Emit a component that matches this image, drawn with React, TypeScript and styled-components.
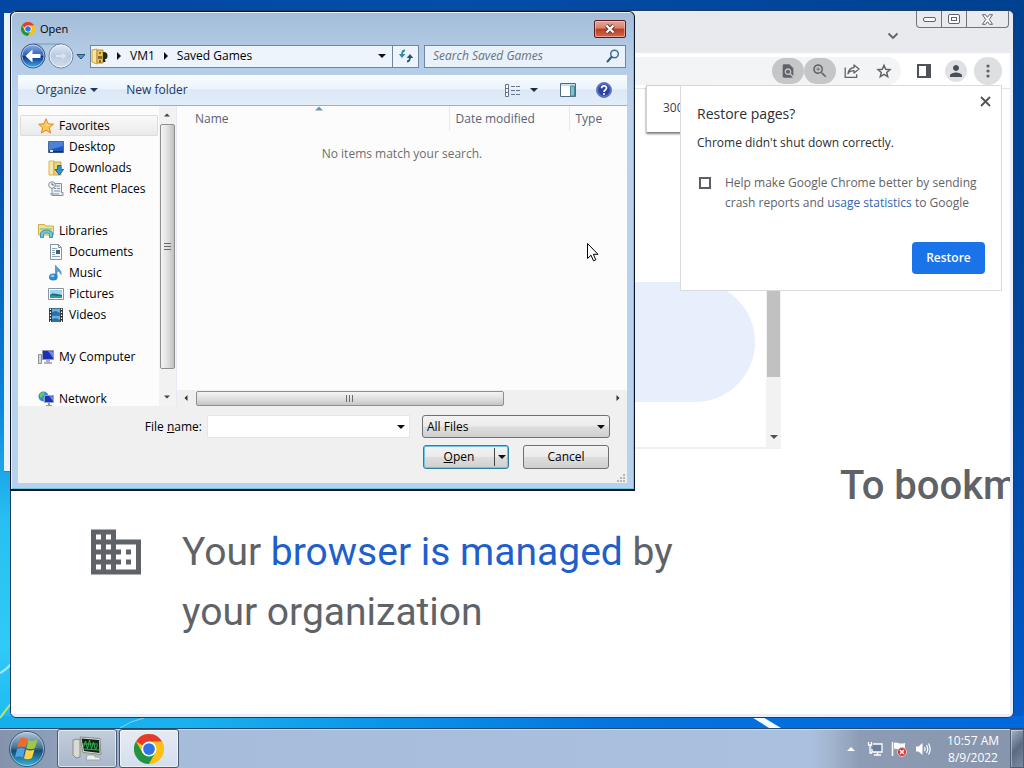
import React from "react";
import styled, { createGlobalStyle } from "styled-components";

const GlobalStyle = createGlobalStyle`
  *, *::before, *::after { box-sizing: border-box; }
  body { margin: 0; font-family: "Open Sans", "Noto Sans", sans-serif; font-size: 12px; line-height: 20px; color: #000; }
  button, input, select { font: inherit; color: inherit; margin: 0; padding: 0; border: 0; background: none; border-radius: 0; outline: none; }
  svg { display: block; flex: none; }
  a { text-decoration: none; }
`;

/* ---------- desktop ---------- */

const Screen = styled.div`
  display: grid;
  grid-template-rows: 1fr 40px;
  height: 100vh;
  overflow: hidden;
  background:
    linear-gradient(to right, #14b0ec, #1ab2ee 18%, #0b97ea 36%, #0474de 60%, #0068dc 100%) bottom / 100% 52px no-repeat,
    linear-gradient(to right, #0247a3, #034dab 45%, #00418f 100%) top / 100% 14px no-repeat,
    linear-gradient(to bottom, #0247a3 0, #0349a8 20%, #0063bf 36%, #0a83dc 52%, #28c0f2 68%, #2fcaf6 84%, #14b0ec 100%) left / 14px 100% no-repeat,
    linear-gradient(to bottom, #00418f 0, #00469e 50%, #005ed0 100%);
`;

const Workspace = styled.div`
  position: relative;
  min-height: 0;
`;

const Streaks = styled.svg`
  position: absolute;
  left: 0;
  bottom: 0;
`;

const BackWindow = styled.div`
  position: absolute;
  left: 4px;
  top: 13px;
  width: 320px;
  height: 459px;
  background: #eaf2fb;
  border-bottom: 1px solid #6a6f86;
`;

/* ---------- browser window ---------- */

const BrowserWindow = styled.section`
  position: absolute;
  inset: 10px;
  display: flex;
  flex-direction: column;
  border: 1px solid #1d3c66;
  border-radius: 6px;
  background: #e9eef8;
  overflow: hidden;
`;

const TabStrip = styled.header`
  display: flex;
  justify-content: flex-end;
  align-items: flex-start;
  gap: 16px;
  height: 42px;
  padding-right: 4px;
  background: #e8eaed;
`;

const TabSearch = styled.button`
  display: grid;
  place-items: center;
  width: 14px;
  height: 14px;
  margin-top: 18px;
`;

const Caption = styled.div`
  display: flex;
  height: 17px;
  border: 1px solid #6f7580;
  border-top: 0;
  border-radius: 0 0 4px 4px;
`;

const CaptionButton = styled.button<{ $w: number }>`
  display: grid;
  place-items: center;
  width: ${(p) => p.$w}px;
  & + & { border-left: 1px solid #6f7580; }
`;

const ClientArea = styled.div`
  display: flex;
  flex-direction: column;
  flex: 1;
  min-height: 0;
  margin: 0 3px 3px 0;
  background: #fff;
`;

const Toolbar = styled.div`
  display: flex;
  align-items: center;
  gap: 9px;
  height: 36px;
  padding-right: 8px;
  border-bottom: 1px solid #e4e5e7;
`;

const Omnibox = styled.div`
  flex: 1;
  display: flex;
  justify-content: flex-end;
  align-items: center;
  height: 28px;
  padding-right: 1px;
  border-radius: 14px;
  background: #f3f4f5;
`;

const ToolButton = styled.button<{ $bg?: string; $size?: number }>`
  display: grid;
  place-items: center;
  width: ${(p) => p.$size ?? 32}px;
  height: ${(p) => (p.$size ? p.$size : 26)}px;
  border-radius: 16px;
  background: ${(p) => p.$bg ?? "transparent"};
`;

const ToolGroup = styled.div`
  display: flex;
  align-items: center;
  gap: 7px;
`;

const Page = styled.main`
  flex: 1;
  min-height: 0;
  overflow: hidden;
  font-family: Roboto, sans-serif;
  font-size: 39px;
  line-height: 60px;
  color: #5f6368;
`;

const Frame = styled.div`
  display: grid;
  grid-template-columns: 1fr 15px;
  width: 770px;
  height: 360px;
  border-bottom: 2px solid #f0f0f0;
`;

const Pill = styled.div`
  height: 120px;
  margin: 193px 11px 0 160px;
  border-radius: 60px;
  background: #e8effc;
`;

const FrameScroll = styled.div`
  display: flex;
  flex-direction: column;
  justify-content: space-between;
  align-items: center;
  padding-bottom: 6px;
  background: #f2f2f2;
`;

const FrameThumb = styled.div`
  width: 13px;
  height: 288px;
  background: #c1c1c1;
`;

const BookmarkLine = styled.h2`
  margin: 0;
  padding: 7px 0 6px 829px;
  font-size: 40px;
  font-weight: 500;
  white-space: nowrap;
`;

const Managed = styled.div`
  display: flex;
  align-items: flex-start;
  gap: 36px;
  padding-left: 75px;
`;

const ManagedText = styled.p`
  max-width: 540px;
  margin: 0;
  a { color: #1f5fcc; }
`;

const ZoomBubble = styled.div`
  position: absolute;
  right: 307px;
  top: 74px;
  width: 60px;
  height: 47px;
  padding: 12px 0 0 16px;
  border-left: 1px solid #d0d0d0;
  border-top: 1px solid #d0d0d0;
  background: #fff;
  box-shadow: 0 2px 2px rgba(0, 0, 0, 0.5);
  color: #3c4043;
`;

const RestoreBubble = styled.aside`
  position: absolute;
  right: 11px;
  top: 74px;
  width: 322px;
  padding: 16px;
  border: 1px solid #d8dadd;
  background: #fff;
  color: #2b2e33;
`;

const BubbleHead = styled.div`
  display: flex;
  justify-content: space-between;
`;

const BubbleTitle = styled.h1`
  margin: 2px 0 9px;
  font-size: 14px;
  line-height: 20px;
  font-weight: 400;
`;

const BubbleClose = styled.button`
  display: grid;
  place-items: center;
  width: 14px;
  height: 14px;
  margin-top: -8px;
  margin-right: -7px;
`;

const BubbleMessage = styled.p`
  margin: 0 0 20px;
`;

const Consent = styled.label`
  display: flex;
  gap: 14px;
  padding-left: 2px;
  color: #5f6368;
  a { color: #2e66b8; }
  input {
    appearance: none;
    flex: none;
    width: 12px;
    height: 12px;
    margin-top: 4px;
    border: 2px solid #5c6065;
  }
`;

const BubbleActions = styled.div`
  display: flex;
  justify-content: flex-end;
  padding-top: 29px;
`;

const RestoreButton = styled.button`
  width: 73px;
  height: 32px;
  border-radius: 4px;
  background: #1a73e8;
  color: #fff;
  font-weight: 600;
`;

/* ---------- file dialog ---------- */

const Dialog = styled.section`
  position: absolute;
  left: 10px;
  top: 11px;
  width: 625px;
  padding: 0 7px 6px;
  border: 1px solid #0c1526;
  border-bottom-width: 2px;
  border-radius: 6px 6px 0 0;
  background: linear-gradient(to bottom, #a3bcd8 0, #b3cbe5 40px, #bbd3ec 100px, #b7d2ee 100%);
  box-shadow: inset 1px 1px 0 #e7f1fb, inset -1px -1px 0 #6cc6e8;
`;

const TitleBar = styled.header`
  display: flex;
  align-items: flex-start;
  gap: 5px;
  height: 32px;
  padding: 8px 1px 0 3px;
  > svg { margin-top: 2px; }
`;

const Title = styled.h2`
  flex: 1;
  margin: 0;
  font-size: 11px;
  font-weight: 400;
  line-height: 18px;
`;

const CloseButton = styled.button`
  display: grid;
  place-items: center;
  width: 32px;
  height: 18px;
  border: 1px solid #5a1a1c;
  border-radius: 2px;
  background: linear-gradient(to bottom, #e3a99b 0, #d5806c 45%, #bc3b22 50%, #cf6a4c 100%);
  box-shadow: inset 0 0 0 1px rgba(255, 220, 210, 0.5);
`;

const NavRow = styled.div`
  display: flex;
  align-items: center;
  gap: 5px;
  height: 24px;
  padding: 0 1px 0 2px;
  margin-bottom: 7px;
`;

const Address = styled.div`
  display: flex;
  align-items: center;
  flex: 1;
  height: 23px;
  border: 1px solid #6f86a3;
  background: #eef4fc;
`;

const Crumb = styled.button`
  padding: 0 7px;
`;

const AddressEnd = styled.button<{ $divided?: boolean }>`
  display: grid;
  place-items: center;
  width: ${(p) => (p.$divided ? 26 : 20)}px;
  height: 21px;
  border-left: ${(p) => (p.$divided ? "1px solid #6f86a3" : "0")};
`;

const Spacer = styled.span`
  flex: 1;
`;

const Search = styled.label`
  display: flex;
  align-items: center;
  width: 202px;
  height: 23px;
  padding: 0 5px 0 8px;
  border: 1px solid #6f86a3;
  background: #e9f1fb;
  input { flex: 1; min-width: 0; }
  input::placeholder { color: #6a717c; font-style: italic; opacity: 1; }
`;

const CommandBar = styled.div`
  display: flex;
  align-items: center;
  height: 31px;
  padding: 0 15px 0 18px;
  border-bottom: 1px solid #a0afc3;
  background: linear-gradient(to bottom, #fafdff 0, #ebf3fc 45%, #dce8f6 50%, #e2edf9 100%);
  color: #1e395b;
`;

const Command = styled.button<{ $gap?: number }>`
  display: flex;
  align-items: center;
  gap: 4px;
  margin-left: ${(p) => p.$gap ?? 0}px;
`;

const Body = styled.div`
  display: grid;
  grid-template-columns: 141px 17px 1fr;
  height: 300px;
  background: #fcfcfc;
  overflow: hidden;
`;

const Tree = styled.ul`
  list-style: none;
  margin: 0;
  padding: 9px 1px 0 2px;
  overflow: hidden;
`;

const TreeRow = styled.li<{ $nested?: boolean; $selected?: boolean; $after?: boolean }>`
  display: flex;
  align-items: center;
  gap: 5px;
  height: 21px;
  margin-bottom: ${(p) => (p.$after ? 21 : 0)}px;
  padding-left: ${(p) => (p.$nested ? 28 : 18)}px;
  white-space: nowrap;
  border-radius: 2px;
  box-shadow: ${(p) => (p.$selected ? "inset 0 0 0 1px #dcdcdc" : "none")};
  background: ${(p) => (p.$selected ? "linear-gradient(to bottom, #fafafa, #e9e9e9)" : "none")};
`;

const VScroll = styled.div`
  display: flex;
  flex-direction: column;
  align-items: center;
  gap: 6px;
  padding: 6px 1px 6px 0;
  background: #f2f2f2;
`;

const VThumb = styled.div`
  display: grid;
  place-items: center;
  flex: 1;
  width: 15px;
  margin-bottom: 19px;
  border: 1px solid #8f8f8f;
  border-radius: 2px;
  background: linear-gradient(to right, #f4f4f4, #e0e0e0 50%, #bfbfbf);
`;

const Listing = styled.div`
  display: flex;
  flex-direction: column;
  min-width: 0;
  border-left: 1px solid #e6ebf3;
`;

const FileTable = styled.table`
  width: 100%;
  table-layout: fixed;
  border-collapse: collapse;
  th {
    height: 25px;
    padding: 0 6px;
    font-weight: 400;
    text-align: left;
    color: #5b6372;
    border-right: 1px solid #e4e8ef;
  }
  th:first-child { padding-left: 18px; }
  th:last-child { border-right: 0; }
  td { padding: 0; height: 46px; text-align: center; vertical-align: middle; color: #6d6d6d; }
`;

const TableHolder = styled.div`
  flex: 1;
`;

const SortMark = styled.div`
  height: 0;
  padding-left: 138px;
`;

const HScroll = styled.div`
  display: flex;
  align-items: center;
  height: 16px;
  padding: 0 6px 0 6px;
  gap: 7px;
  background: #f0f0f0;
`;

const HThumb = styled.div`
  display: grid;
  place-items: center;
  width: 308px;
  height: 15px;
  border: 1px solid #8f8f8f;
  border-radius: 2px;
  background: linear-gradient(to bottom, #f4f4f4, #e0e0e0 50%, #c6c6c6);
`;

const Footer = styled.form`
  display: grid;
  grid-template-columns: 1fr 188px;
  gap: 7px 12px;
  padding: 9px 17px 14px;
  background: #f0f0f0;
`;

const FileName = styled.div`
  display: flex;
  justify-content: flex-end;
  align-items: center;
  gap: 5px;
`;

const Combo = styled.div`
  display: flex;
  align-items: center;
  width: 203px;
  height: 23px;
  padding: 0 4px;
  border: 1px solid #e3e6ea;
  background: #fff;
  input { flex: 1; min-width: 0; }
`;

const face = `
  border: 1px solid #707070;
  border-radius: 3px;
  background: linear-gradient(to bottom, #f3f3f3 0, #ebebeb 48%, #dddddd 52%, #d0d0d0 100%);
`;

const FilterBox = styled.div`
  ${face}
  display: grid;
  grid-template-columns: 1fr 12px;
  align-items: center;
  height: 23px;
  select {
    appearance: none;
    grid-area: 1 / 1 / 2 / 3;
    width: 100%;
    height: 21px;
    padding-left: 4px;
  }
  svg { grid-area: 1 / 2; pointer-events: none; }
`;

const Buttons = styled.div`
  grid-column: 2;
  display: flex;
  justify-content: space-between;
  padding: 0 1px;
`;

const SplitButton = styled.div`
  ${face}
  display: flex;
  align-items: center;
  width: 86px;
  height: 24px;
  border-color: #2f7f9f;
  box-shadow: inset 0 0 0 1px #6cc7e6;
`;

const OpenButton = styled.button`
  flex: 1;
  height: 22px;
`;

const OpenMore = styled.button`
  display: grid;
  place-items: center;
  width: 14px;
  height: 18px;
  border-left: 1px solid #444;
`;

const CancelButton = styled.button`
  ${face}
  width: 86px;
  height: 24px;
`;

const Grip = styled.svg`
  position: absolute;
  right: 9px;
  bottom: 7px;
`;

const Cursor = styled.svg`
  position: absolute;
  left: 586px;
  top: 242px;
`;

/* ---------- taskbar ---------- */

const Taskbar = styled.footer`
  position: relative;
  display: flex;
  align-items: stretch;
  border-top: 1px solid #25496f;
  box-shadow: inset 0 1px 0 #c9d8ea;
  background: linear-gradient(to right, #8492ab 0, #8f9fba 56px, #a5bcda 180px, #a9c1df 79%, #a3b6d0 81%, #8d9cb4 84%, #8795ac 100%);
`;

const StartButton = styled.button`
  display: grid;
  place-items: center;
  width: 54px;
  margin-right: 3px;
`;

const TaskButton = styled.button<{ $active?: boolean }>`
  display: grid;
  place-items: center;
  width: 60px;
  margin-right: 2px;
  border: 1px solid ${(p) => (p.$active ? "#46566f" : "#4b5b75")};
  border-radius: 3px;
  box-shadow: inset 0 0 0 1px rgba(255, 255, 255, 0.6);
  background: ${(p) => (p.$active ? "linear-gradient(to bottom, #e6ebf3, #d3dfee)" : "linear-gradient(to bottom, #c3cedd, #a9b7cb)")};
`;

const Tray = styled.div`
  display: flex;
  align-items: center;
  margin-left: auto;
`;

const TrayIcons = styled.div`
  display: flex;
  align-items: center;
  gap: 8px;
  padding-right: 5px;
`;

const TrayButton = styled.button`
  display: grid;
  place-items: center;
  width: 16px;
  height: 16px;
`;

const Clock = styled.time`
  width: 74px;
  text-align: center;
  line-height: 17px;
  padding-top: 1px;
  color: #fff;
`;

const ShowDesktop = styled.button`
  align-self: stretch;
  width: 14px;
  border: 1px solid #4f5e75;
  box-shadow: inset 1px 1px 0 rgba(255, 255, 255, 0.4);
  background: linear-gradient(135deg, #a6b2c4, #5a6a81 50%, #7d8ba0);
`;

/* ---------- drawings ---------- */

const Arrow = ({ dir = "down", color = "#111", w = 8 }: { dir?: "down" | "up" | "left" | "right"; color?: string; w?: number }) => {
  const turn = { down: 0, left: 90, up: 180, right: 270 }[dir];
  return (
    <svg width={w} height={w} viewBox="0 0 8 8">
      <path d="M0 2h8L4 6z" fill={color} transform={`rotate(${turn} 4 4)`} />
    </svg>
  );
};

const ChromeLogo = ({ size }: { size: number }) => (
  <svg width={size} height={size} viewBox="0 0 48 48">
    <circle cx="24" cy="24" r="24" fill="#fbc116" />
    <path d="M24 24 3.2 12A24 24 0 0 1 44.8 12z" fill="#e33b2e" />
    <path d="M3.2 12A24 24 0 0 0 24 48L34.4 30 24 24 13.6 30z" fill="#229342" />
    <path d="M24 12h20.8A24 24 0 0 1 24 48l10.4-18z" fill="#fbc116" />
    <circle cx="24" cy="24" r="12" fill="#fff" />
    <circle cx="24" cy="24" r="9.4" fill="#2f74e6" />
  </svg>
);

const NavArrows = () => (
  <svg width="65" height="26" viewBox="0 0 65 26">
    <defs>
      <linearGradient id="backFill" x1="0" y1="0" x2="0" y2="1">
        <stop offset="0" stopColor="#8fb2e6" />
        <stop offset=".48" stopColor="#2c5fb6" />
        <stop offset=".52" stopColor="#0d3389" />
        <stop offset="1" stopColor="#3fb4f2" />
      </linearGradient>
      <linearGradient id="nextFill" x1="0" y1="0" x2="0" y2="1">
        <stop offset="0" stopColor="#dfe9f5" />
        <stop offset=".5" stopColor="#b9cbe0" />
        <stop offset="1" stopColor="#cfe0f2" />
      </linearGradient>
    </defs>
    <path d="M13 1h29" stroke="#7f97b8" />
    <circle cx="13" cy="13" r="12" fill="url(#backFill)" stroke="#3c5479" />
    <circle cx="13" cy="13" r="11" fill="none" stroke="#cfe2f8" strokeOpacity=".7" />
    <path d="M5.500 13l7-6.500v4.500H20.500v4h-8v4.500z" fill="#fff" />
    <circle cx="41" cy="13" r="12" fill="url(#nextFill)" stroke="#6d82a0" />
    <circle cx="41" cy="13" r="11" fill="none" stroke="#fff" strokeOpacity=".7" />
    <path d="M36 13h9M42 10.500l3 2.500-3 2.500" fill="none" stroke="#d8e4f2" strokeWidth="2" />
    <path d="M57 11.500h8l-4 4.500z" fill="#4f9cc8" stroke="#27517a" />
  </svg>
);

const GameFolder = () => (
  <svg width="17" height="17" viewBox="0 0 17 17">
    <path d="M1 2l5-1v15l-5-2z" fill="#f7e39a" stroke="#c9a443" />
    <path d="M6 2h6v13H6z" fill="#e9c75b" stroke="#b58d31" />
    <path d="M8 4h2v2H8zM7 8h4v3H7zM8 12h2v3H8z" fill="#8a6f35" />
    <path d="M12.500 4c3 0 4 1.500 4 4s-1 3-2.500 3l.500 3h-2.500V4z" fill="#222920" />
  </svg>
);

const Refresh = () => (
  <svg width="16" height="14" viewBox="0 0 16 14">
    <path d="M7 1.500C5 1.500 4 3 4 6" fill="none" stroke="#2f8aa8" strokeWidth="1.800" />
    <path d="M.8 5h6.600L4 9z" fill="#2f8aa8" />
    <path d="M9 12.500c2 0 3-1.500 3-4.500" fill="none" stroke="#2a4f7e" strokeWidth="1.800" />
    <path d="M8.700 9h6.600L12 5z" fill="#2a4f7e" />
  </svg>
);

const SearchGlass = () => (
  <svg width="14" height="14" viewBox="0 0 14 14">
    <circle cx="8.500" cy="5" r="3.800" fill="#e6f4fb" stroke="#3d6f9a" strokeWidth="1.500" />
    <path d="M5.500 8L1.500 12.500" stroke="#2c5a86" strokeWidth="2" strokeLinecap="round" />
  </svg>
);

const ViewIcon = () => (
  <svg width="16" height="13" viewBox="0 0 16 13">
    <g fill="#fff" stroke="#66758b">
      <path d="M.5.5h3v12h-3zM.5 4.500h3M.5 8.500h3" />
    </g>
    <path d="M6 2.500h4M11 2.500h4M6 6.500h4M11 6.500h4M6 10.500h4M11 10.500h4" stroke="#66758b" />
  </svg>
);

const PaneIcon = () => (
  <svg width="16" height="14" viewBox="0 0 16 14">
    <path d="M.5.5h15v13H.5z" fill="#fff" stroke="#4b6b85" />
    <path d="M1 1h14v2H1z" fill="#c9dfea" />
    <path d="M10.500 3h4v10h-4z" fill="#7fc0cb" stroke="#4b8797" />
  </svg>
);

const HelpIcon = () => (
  <svg width="16" height="16" viewBox="0 0 16 16">
    <circle cx="8" cy="8" r="7.500" fill="#2a41a6" stroke="#6d7fb5" />
    <circle cx="8" cy="8" r="6.300" fill="none" stroke="#8fa3e0" strokeOpacity=".7" />
    <path d="M5.600 6.300c0-3.200 5-3.200 4.900-.2C10.500 8 8 8 8 10" fill="none" stroke="#fff" strokeWidth="1.700" />
    <circle cx="8" cy="12" r="1.100" fill="#fff" />
  </svg>
);

const StarIcon = () => (
  <svg width="16" height="16" viewBox="0 0 16 16">
    <path d="M8 .8l2.100 5 5.300.4-4.100 3.500 1.300 5.300L8 12.200 3.400 15l1.300-5.300L.6 6.200l5.300-.4z" fill="#fcc657" stroke="#df8526" />
    <path d="M8 3l1.300 3.800H13L9 8z" fill="#fff0b5" />
  </svg>
);

const DesktopIcon = () => (
  <svg width="16" height="16" viewBox="0 0 16 16">
    <path d="M.5 2.500h15v11H.5z" fill="#2456b8" stroke="#4a6b9a" />
    <path d="M1 3h14v4L1 11z" fill="#4a82dc" />
    <path d="M1 12h14v1.500H1z" fill="#1b3358" />
    <path d="M2 11h3v2H2z" fill="#dfe9f5" />
  </svg>
);

const DownloadsIcon = () => (
  <svg width="16" height="16" viewBox="0 0 16 16">
    <path d="M1 1h5v14H1z" fill="#f8e8a8" stroke="#d3b658" />
    <path d="M6 2h7v13H6z" fill="#efd67a" stroke="#c9a94c" />
    <path d="M9.500 5.500h3.500v4h2.500l-4.200 5.500L7 9.500h2.500z" fill="#2f93d6" stroke="#1d6ba6" />
  </svg>
);

const RecentIcon = () => (
  <svg width="16" height="16" viewBox="0 0 16 16">
    <path d="M4 2.500h9.500v9H15v3H4z" fill="#e9eef2" stroke="#84909b" />
    <path d="M6 5h6M6 7.500h2M9 7.500h3M6 10h6M2 13h9" stroke="#8795a3" />
    <circle cx="4" cy="4" r="3.300" fill="#f5f8fa" stroke="#84909b" />
    <path d="M4 2v2h2" fill="none" stroke="#5d6b78" />
  </svg>
);

const LibrariesIcon = () => (
  <svg width="16" height="16" viewBox="0 0 16 16">
    <path d="M.5 1.500h6l1 1.500h8v9H.5z" fill="#f6df86" stroke="#cfae4b" />
    <path d="M2 5h12v2H2z" fill="#9ed29a" />
    <path d="M2.500 14.500v-4c0-4.500 12-4.500 12 0v4h-3v-3c0-2-6-2-6 0v3z" fill="#6cc4e6" stroke="#3d8fb8" />
  </svg>
);

const DocumentIcon = () => (
  <svg width="16" height="16" viewBox="0 0 16 16">
    <path d="M2.500.5h8l3 3v12h-11z" fill="#fbfdfe" stroke="#84939f" />
    <path d="M10.500.5v3h3" fill="none" stroke="#84939f" />
    <path d="M4 4.500h5M4 6.500h3M4 8.500h3M4 10.500h3M4 12.500h8" stroke="#8fa5b3" />
    <path d="M8 6h4v4H8z" fill="#3e5f74" />
  </svg>
);

const MusicIcon = () => (
  <svg width="16" height="16" viewBox="0 0 16 16">
    <path d="M8 .5c1 3 6 4 5 9-.500-2-2-3.500-4-3.500V12H7.500V.5z" fill="#5aa3d6" stroke="#3478aa" strokeWidth=".6" />
    <ellipse cx="5.300" cy="12" rx="4.300" ry="3.500" fill="#2f86cf" />
    <ellipse cx="4.500" cy="11" rx="2" ry="1.200" fill="#8cc8f0" />
  </svg>
);

const PicturesIcon = () => (
  <svg width="16" height="16" viewBox="0 0 16 16">
    <path d="M.5 2.500h15v11H.5z" fill="#fff" stroke="#8793a0" />
    <path d="M2 4h12v8H2z" fill="#9bd6ee" />
    <path d="M2 9c3-3 6-1 12 0v3H2z" fill="#1f6a76" />
    <path d="M2 9.500c4-1 7 1 12 .5V12H2z" fill="#2c9aa0" />
  </svg>
);

const VideosIcon = () => (
  <svg width="16" height="16" viewBox="0 0 16 16">
    <path d="M1 1h14v14H1z" fill="#2c2f33" />
    <path d="M4 1.500h8v6H4zM4 8.500h8v6H4z" fill="#63b1e6" />
    <path d="M4 5l4-1 4 2v1.500H4zM4 12l4-1 4 2v1.500H4z" fill="#2c6ea8" />
    <path d="M2.500 1.500v14M13.500 1.500v14" stroke="#fff" strokeWidth="1.300" strokeDasharray="1.500 1.500" />
  </svg>
);

const ComputerIcon = () => (
  <svg width="16" height="16" viewBox="0 0 16 16">
    <path d="M.5 5.500h3v9h-3z" fill="#d4d8dc" stroke="#8b9299" />
    <path d="M4.500 1.500h11v9h-11z" fill="#1c2fb8" stroke="#8f9aad" />
    <path d="M10 2l5 .5V9z" fill="#6f8af0" />
    <path d="M8 11h4v2h2v2H6v-2h2z" fill="#aab1ba" />
  </svg>
);

const NetworkIcon = () => (
  <svg width="16" height="16" viewBox="0 0 16 16">
    <circle cx="5.500" cy="5.500" r="5" fill="#2f8fd0" />
    <path d="M2 3c2-2 4-2 5-1L5 5 2 7zM5 7l3 1-2 2z" fill="#6cc46a" />
    <path d="M6.500 4.500h9v7h-9z" fill="#1c2fb8" stroke="#9aa6bb" />
    <path d="M11 5l4 .5V10z" fill="#6f8af0" />
    <path d="M10 12h2v2h2v1.500H8V14h2z" fill="#8d98a8" />
  </svg>
);

const BuildingIcon = () => (
  <svg width="60" height="60" viewBox="0 0 24 24" fill="#5f6368">
    <path d="M12 7V3H2v18h20V7H12zM6 19H4v-2h2v2zm0-4H4v-2h2v2zm0-4H4V9h2v2zm0-4H4V5h2v2zm4 12H8v-2h2v2zm0-4H8v-2h2v2zm0-4H8V9h2v2zm0-4H8V5h2v2zm10 12h-8v-2h2v-2h-2v-2h2v-2h-2V9h8v10zm-2-8h-2v2h2v-2zm0 4h-2v2h2v-2z" />
  </svg>
);

const Glyph = ({ d, size = 18, color = "#5f6368" }: { d: string; size?: number; color?: string }) => (
  <svg width={size} height={size} viewBox="0 0 24 24" fill={color}>
    <path d={d} />
  </svg>
);

const StartOrb = () => (
  <svg width="38" height="38" viewBox="0 0 38 38">
    <defs>
      <linearGradient id="orb" x1="0" y1="0" x2="0" y2="1">
        <stop offset="0" stopColor="#b5c8da" />
        <stop offset=".45" stopColor="#4b7595" />
        <stop offset=".55" stopColor="#174a70" />
        <stop offset="1" stopColor="#35b8e0" />
      </linearGradient>
    </defs>
    <circle cx="19" cy="19" r="17.500" fill="url(#orb)" stroke="#33597b" />
    <circle cx="19" cy="19" r="16.500" fill="none" stroke="#d4e6f2" strokeOpacity=".6" />
    <path d="M11.500 9c3-2.500 5-1.500 8 0l-2 8.500c-3-1.500-5-1.500-8 0z" fill="#ef6a31" />
    <path d="M20.500 10c3 1.500 6 1 9-.5l-2.500 8.500c-3 1.500-5.500 1.500-8.500.5z" fill="#9ccb3f" />
    <path d="M9 19c3-1.500 5.500-1.500 8 0L15 27.500c-3-1.500-5.500-1.500-8 0z" fill="#4da4e4" />
    <path d="M18 19.500c3 1.500 6 1 8.500 0l-2.500 8.500c-3 1.500-5.500 1.500-8 .5z" fill="#fbd14b" />
  </svg>
);

const MonitorApp = () => (
  <svg width="32" height="28" viewBox="0 0 32 28">
    <path d="M2 5l4-1 3 1v17l-4 1-3-3z" fill="#d9dbd3" stroke="#8a8d84" />
    <path d="M9 2l20 1.500 1 16-18-2z" fill="#dfe1da" stroke="#8a8d84" />
    <path d="M10.500 3.500l17.500 1.500 .5 13-15.500-2z" fill="#10251a" />
    <path d="M12.500 12l2-6 2 8 2-9 2 9 2-7 2 8 2-5M12 9h15M13 14l15 1" fill="none" stroke="#2fae4a" />
    <path d="M16 20h8v2h4l2 3H15z" fill="#eceee9" stroke="#a0a39b" />
  </svg>
);

const tree = [
  { name: "Favorites", icon: <StarIcon />, selected: true },
  { name: "Desktop", icon: <DesktopIcon />, nested: true },
  { name: "Downloads", icon: <DownloadsIcon />, nested: true },
  { name: "Recent Places", icon: <RecentIcon />, nested: true, after: true },
  { name: "Libraries", icon: <LibrariesIcon /> },
  { name: "Documents", icon: <DocumentIcon />, nested: true },
  { name: "Music", icon: <MusicIcon />, nested: true },
  { name: "Pictures", icon: <PicturesIcon />, nested: true },
  { name: "Videos", icon: <VideosIcon />, nested: true, after: true },
  { name: "My Computer", icon: <ComputerIcon />, after: true },
  { name: "Network", icon: <NetworkIcon /> },
];

/* ---------- parts ---------- */

const Browser = () => (
  <BrowserWindow aria-label="Browser">
    <TabStrip>
      <TabSearch aria-label="Search tabs">
        <svg width="12" height="8" viewBox="0 0 12 8"><path d="M1.500 1.500L6 6l4.500-4.500" fill="none" stroke="#5f6368" strokeWidth="1.800" /></svg>
      </TabSearch>
      <Caption>
        <CaptionButton $w={24} aria-label="Minimize">
          <svg width="13" height="6" viewBox="0 0 13 6"><rect x=".5" y="1.500" width="12" height="4" rx="1.500" fill="#fff" stroke="#5d626b" /></svg>
        </CaptionButton>
        <CaptionButton $w={25} aria-label="Maximize">
          <svg width="12" height="10" viewBox="0 0 12 10" fill="#fff" stroke="#5d626b"><rect x=".5" y=".5" width="11" height="9" rx="1.500" /><rect x="3.500" y="3.500" width="5" height="3" /></svg>
        </CaptionButton>
        <CaptionButton $w={42} aria-label="Close window">
          <svg width="13" height="11" viewBox="0 0 13 11"><path d="M1.500.7h3l2 2.600 2-2.600h3L8.300 5.500l3.200 4.800h-3l-2-2.600-2 2.600h-3l3.200-4.800z" fill="#fff" stroke="#5d626b" /></svg>
        </CaptionButton>
      </Caption>
    </TabStrip>
    <ClientArea>
      <Toolbar>
        <Omnibox>
          <ToolButton $bg="#c4c6c8" aria-label="Find in page">
            <Glyph size={16} d="M20 19.590V8l-6-6H6c-1.100 0-1.990.9-1.990 2L4 20c0 1.100.890 2 1.990 2H18c.450 0 .850-.150 1.190-.4l-4.430-4.430c-.8.520-1.740.830-2.760.830-2.760 0-5-2.240-5-5s2.240-5 5-5 5 2.240 5 5c0 1.020-.310 1.960-.830 2.750L20 19.590zM9 13c0 1.660 1.340 3 3 3s3-1.340 3-3-1.340-3-3-3-3 1.340-3 3z" />
          </ToolButton>
          <ToolButton $bg="#c4c6c8" aria-label="Zoom">
            <Glyph size={18} d="M15.500 14h-.790l-.280-.270C15.410 12.590 16 11.110 16 9.500 16 5.910 13.090 3 9.500 3S3 5.910 3 9.500 5.910 16 9.500 16c1.610 0 3.090-.590 4.230-1.570l.270.280v.790l5 4.990L20.490 19l-4.990-5zm-6 0C7.010 14 5 11.990 5 9.500S7.010 5 9.500 5 14 7.010 14 9.500 11.990 14 9.500 14zm2.500-4h-2v2H9v-2H7V9h2V7h1v2h2v1z" />
          </ToolButton>
          <ToolButton aria-label="Share">
            <svg width="16" height="14" viewBox="0 0 16 14" fill="none" stroke="#5f6368" strokeWidth="1.300"><path d="M1.200 3.500v9.800h11.500v-3" /><path d="M10 1l5 4-5 4V6.700c-3 0-5 1-6 3C4.500 6.500 6.500 4 10 3.500z" strokeLinejoin="round" /></svg>
          </ToolButton>
          <ToolButton aria-label="Bookmark">
            <svg width="16" height="16" viewBox="0 0 24 24"><path d="M12 3.500l2.600 6 6.400.5-4.900 4.200 1.500 6.300L12 17.200l-5.600 3.300 1.500-6.300L3 10l6.400-.5z" fill="none" stroke="#5f6368" strokeWidth="2.200" /></svg>
          </ToolButton>
        </Omnibox>
        <ToolGroup>
          <ToolButton $size={28} aria-label="Side panel">
            <svg width="14" height="14" viewBox="0 0 14 14"><path d="M1 1h12v12H1z" fill="#fff" stroke="#4f5358" strokeWidth="2" /><path d="M9 1h4v12H9z" fill="#4f5358" /></svg>
          </ToolButton>
          <ToolButton $size={22} $bg="#dfe1e5" aria-label="Profile">
            <Glyph size={18} color="#4a4f57" d="M12 12c2.210 0 4-1.790 4-4s-1.790-4-4-4-4 1.790-4 4 1.790 4 4 4zm0 2c-2.670 0-8 1.340-8 4v2h16v-2c0-2.660-5.330-4-8-4z" />
          </ToolButton>
          <ToolButton $size={28} $bg="#dddfe0" aria-label="Menu">
            <svg width="4" height="14" viewBox="0 0 4 14" fill="#5f6368"><circle cx="2" cy="2" r="1.600" /><circle cx="2" cy="7" r="1.600" /><circle cx="2" cy="12" r="1.600" /></svg>
          </ToolButton>
        </ToolGroup>
      </Toolbar>
      <Page>
        <Frame>
          <Pill />
          <FrameScroll><FrameThumb /><Arrow color="#505050" /></FrameScroll>
        </Frame>
        <BookmarkLine>To bookmark</BookmarkLine>
        <Managed>
          <BuildingIcon />
          <ManagedText>Your <a href="#managed">browser is managed</a> by your organization</ManagedText>
        </Managed>
      </Page>
    </ClientArea>
    <ZoomBubble>300%</ZoomBubble>
    <RestoreBubble>
      <BubbleHead>
        <BubbleTitle>Restore pages?</BubbleTitle>
        <BubbleClose aria-label="Dismiss">
          <svg width="11" height="11" viewBox="0 0 11 11"><path d="M1 1l9 9M10 1l-9 9" stroke="#4f5358" strokeWidth="1.800" /></svg>
        </BubbleClose>
      </BubbleHead>
      <BubbleMessage>Chrome didn't shut down correctly.</BubbleMessage>
      <Consent>
        <input type="checkbox" />
        <span>Help make Google Chrome better by sending<br />crash reports and <a href="#usage">usage statistics</a> to Google</span>
      </Consent>
      <BubbleActions><RestoreButton>Restore</RestoreButton></BubbleActions>
    </RestoreBubble>
  </BrowserWindow>
);

const OpenDialog = () => (
  <Dialog role="dialog" aria-label="Open">
    <TitleBar>
      <ChromeLogo size={14} />
      <Title>Open</Title>
      <CloseButton aria-label="Close">
        <svg width="12" height="10" viewBox="0 0 12 10"><path d="M2.500 1.500l7 7M9.500 1.500l-7 7" stroke="#5b2f33" strokeWidth="4" /><path d="M2.500 1.500l7 7M9.500 1.500l-7 7" stroke="#fff" strokeWidth="2.300" /></svg>
      </CloseButton>
    </TitleBar>
    <NavRow>
      <NavArrows />
      <Address>
        <GameFolder />
        <Crumb aria-label="Root"><Arrow dir="right" /></Crumb>
        <span>VM1</span>
        <Crumb aria-label="VM1 folders"><Arrow dir="right" /></Crumb>
        <span>Saved Games</span>
        <Spacer />
        <AddressEnd aria-label="Previous locations"><Arrow /></AddressEnd>
        <AddressEnd $divided aria-label="Refresh"><Refresh /></AddressEnd>
      </Address>
      <Search>
        <input type="search" placeholder="Search Saved Games" aria-label="Search Saved Games" />
        <SearchGlass />
      </Search>
    </NavRow>
    <CommandBar>
      <Command>Organize <Arrow color="#1e395b" /></Command>
      <Command $gap={28}>New folder</Command>
      <Spacer />
      <Command aria-label="Change view"><ViewIcon /></Command>
      <Command $gap={9} aria-label="More views"><Arrow color="#1e2b3d" /></Command>
      <Command $gap={22} aria-label="Preview pane"><PaneIcon /></Command>
      <Command $gap={20} aria-label="Help"><HelpIcon /></Command>
    </CommandBar>
    <Body>
      <Tree>
        {tree.map((t) => (
          <TreeRow key={t.name} $nested={t.nested} $selected={t.selected} $after={t.after}>
            {t.icon}
            {t.name}
          </TreeRow>
        ))}
      </Tree>
      <VScroll>
        <Arrow dir="up" color="#444" w={6} />
        <VThumb>
          <svg width="7" height="8" viewBox="0 0 7 8"><path d="M0 .5h7M0 3.500h7M0 6.500h7" stroke="#6b6b6b" /></svg>
        </VThumb>
        <Arrow color="#444" w={6} />
      </VScroll>
      <Listing>
        <SortMark><svg width="8" height="5" viewBox="0 0 8 5"><path d="M0 4.500L4 .5l4 4z" fill="#6d93ad" /></svg></SortMark>
        <TableHolder>
          <FileTable>
            <colgroup><col /><col width="120" /><col width="58" /></colgroup>
            <thead><tr><th>Name</th><th>Date modified</th><th>Type</th></tr></thead>
            <tbody><tr><td colSpan={3}>No items match your search.</td></tr></tbody>
          </FileTable>
        </TableHolder>
        <HScroll>
          <Arrow dir="left" color="#333" w={6} />
          <HThumb>
            <svg width="8" height="7" viewBox="0 0 8 7"><path d="M.5 0v7M3.500 0v7M6.500 0v7" stroke="#6b6b6b" /></svg>
          </HThumb>
          <Spacer />
          <Arrow dir="right" color="#333" w={6} />
        </HScroll>
      </Listing>
    </Body>
    <Footer onSubmit={(e) => e.preventDefault()}>
      <FileName>
        <label htmlFor="file-name">File <u>n</u>ame:</label>
        <Combo>
          <input id="file-name" type="text" />
          <button type="button" aria-label="Recent names"><Arrow /></button>
        </Combo>
      </FileName>
      <FilterBox>
        <select aria-label="File type"><option>All Files</option></select>
        <Arrow />
      </FilterBox>
      <Buttons>
        <SplitButton>
          <OpenButton type="submit"><u>O</u>pen</OpenButton>
          <OpenMore type="button" aria-label="Open options"><Arrow /></OpenMore>
        </SplitButton>
        <CancelButton type="button">Cancel</CancelButton>
      </Buttons>
    </Footer>
    <Grip width="8" height="8" viewBox="0 0 8 8">
      <path d="M6 0h2v2H6zM3 3h2v2H3zM6 3h2v2H6zM0 6h2v2H0zM3 6h2v2H3zM6 6h2v2H6z" fill="#b5b5b5" />
    </Grip>
  </Dialog>
);

export default function App() {
  return (
    <Screen>
      <GlobalStyle />
      <Workspace>
        <Streaks width="800" height="80" viewBox="0 0 800 80">
          <path d="M0 25q6-3 12-10" fill="none" stroke="#a9e6fb" strokeWidth="2" />
          <path d="M0 70L12 54" stroke="#b5e86a" strokeWidth="2" />
          <path d="M120 80q10-7 24-10" fill="none" stroke="#7fd8f6" strokeWidth="1" />
          <path d="M750 68h11l20 12h-12z" fill="#f4fbff" />
        </Streaks>
        <BackWindow />
        <Browser />
        <OpenDialog />
        <Cursor width="13" height="20" viewBox="0 0 13 20">
          <path d="M1.500 1.500v15l3.500-3.300 2.500 5.600 2.300-1-2.400-5.500h4.600z" fill="#fff" stroke="#000" />
        </Cursor>
      </Workspace>
      <Taskbar>
        <StartButton aria-label="Start"><StartOrb /></StartButton>
        <TaskButton aria-label="System monitor"><MonitorApp /></TaskButton>
        <TaskButton $active aria-label="Chrome"><ChromeLogo size={30} /></TaskButton>
        <Tray>
          <TrayIcons>
            <TrayButton aria-label="Show hidden icons"><Arrow dir="up" color="#fff" /></TrayButton>
            <TrayButton aria-label="Network">
              <svg width="16" height="16" viewBox="0 0 16 16" fill="none" stroke="#fff" strokeWidth="1.300"><path d="M6 3h9v8H5V8" fill="#6b7f9b" /><path d="M7 14h7M10.500 11v3" /><path d="M1.500 1v3h3V1M3 4v8h2" /></svg>
            </TrayButton>
            <TrayButton aria-label="Action center">
              <svg width="16" height="16" viewBox="0 0 16 16"><path d="M1.500 1v14" stroke="#fff" strokeWidth="1.500" /><path d="M3 2c3-2 5 2 11 0v6c-5 2-8-1-11 0z" fill="#fff" /><circle cx="11" cy="11" r="4.500" fill="#d23434" stroke="#f0c0c0" /><path d="M9 9l4 4M13 9l-4 4" stroke="#fff" strokeWidth="1.500" /></svg>
            </TrayButton>
            <TrayButton aria-label="Volume">
              <svg width="16" height="16" viewBox="0 0 16 16"><path d="M1 5.500h2.500L7.500 2v12l-4-3.500H1z" fill="#fff" /><path d="M9.500 6q1.300 2 0 4M11.500 4q2.500 4 0 8M13.500 2.500q3.300 5.500 0 11" fill="none" stroke="#fff" strokeWidth="1.200" /></svg>
            </TrayButton>
          </TrayIcons>
          <Clock>10:57 AM<br />8/9/2022</Clock>
          <ShowDesktop aria-label="Show desktop" />
        </Tray>
      </Taskbar>
    </Screen>
  );
}
